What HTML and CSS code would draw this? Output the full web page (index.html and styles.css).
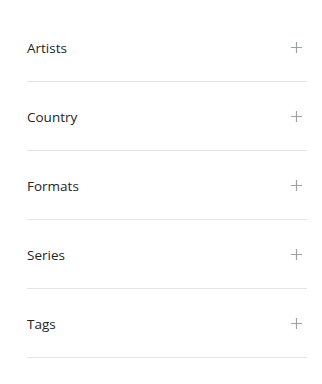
FILE: index.html
```html
<!DOCTYPE html>
<html>
<head>
<meta charset="utf-8">
<link rel="stylesheet" href="styles.css">
</head>
<body>
<div class="filters">
  <div class="row"><span class="label">Artists</span><svg class="plus" viewBox="0 0 11 11"><path d="M5.5 0v11M0 5.5h11"/></svg></div>
  <div class="row"><span class="label">Country</span><svg class="plus" viewBox="0 0 11 11"><path d="M5.5 0v11M0 5.5h11"/></svg></div>
  <div class="row"><span class="label">Formats</span><svg class="plus" viewBox="0 0 11 11"><path d="M5.5 0v11M0 5.5h11"/></svg></div>
  <div class="row"><span class="label">Series</span><svg class="plus" viewBox="0 0 11 11"><path d="M5.5 0v11M0 5.5h11"/></svg></div>
  <div class="row"><span class="label">Tags</span><svg class="plus" viewBox="0 0 11 11"><path d="M5.5 0v11M0 5.5h11"/></svg></div>
</div>
</body>
</html>
```
FILE: styles.css
```css
html, body { margin: 0; padding: 0; background: #fff; }
.filters {
  width: 280px;
  margin-left: 27px;
  padding-top: 13px;
}
.row {
  height: 68px;
  border-bottom: 1px solid #e5e5e5;
  display: flex;
  align-items: center;
  justify-content: space-between;
  padding-right: 5px;
}
.label {
  font-family: "Open Sans", sans-serif;
  font-size: 13.5px;
  color: #212529;
  padding-top: 2px;
}
.plus {
  width: 11px;
  height: 11px;
  stroke: #9ca0a8;
  stroke-width: 1.2;
  fill: none;
}
```
